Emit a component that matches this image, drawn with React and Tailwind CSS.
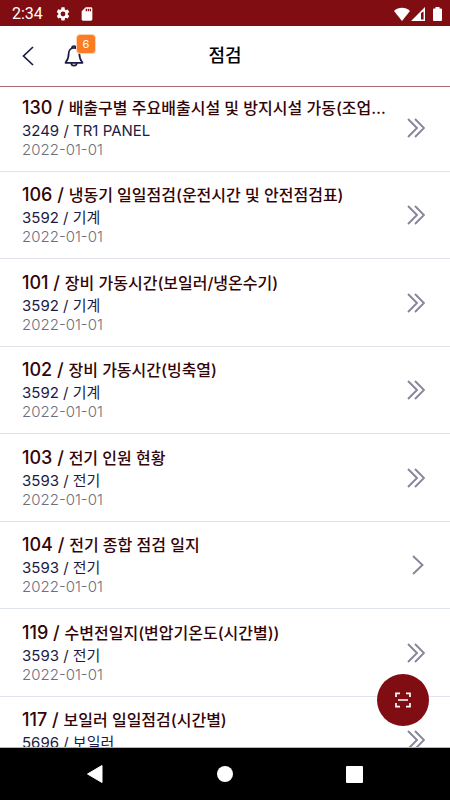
import React from 'react';

const items = [
  { id: 130, title: '배출구별 주요배출시설 및 방지시설 가동(조업시간별)', place: '3249 / TR1 PANEL', double: true },
  { id: 106, title: '냉동기 일일점검(운전시간 및 안전점검표)', place: '3592 / 기계', double: true },
  { id: 101, title: '장비 가동시간(보일러/냉온수기)', place: '3592 / 기계', double: true },
  { id: 102, title: '장비 가동시간(빙축열)', place: '3592 / 기계', double: true },
  { id: 103, title: '전기 인원 현황', place: '3593 / 전기', double: true },
  { id: 104, title: '전기 종합 점검 일지', place: '3593 / 전기', double: false },
  { id: 119, title: '수변전일지(변압기온도(시간별))', place: '3593 / 전기', double: true },
  { id: 117, title: '보일러 일일점검(시간별)', place: '5696 / 보일러', double: true },
];

const StatusBar = () => (
  <div className="flex h-[26px] shrink-0 items-center bg-[#7f0d12] pl-3 pr-2 pt-px text-white">
    <span className="font-['Roboto',sans-serif] text-base leading-5">2:34</span>
    <svg className="ml-3 size-4" viewBox="0 0 24 24" fill="currentColor">
      <path d="M19.14 12.94c.04-.3.06-.61.06-.94s-.02-.64-.07-.94l2.03-1.58a.5.5 0 0 0 .12-.61l-1.92-3.32a.49.49 0 0 0-.59-.22l-2.39.96c-.5-.38-1.03-.7-1.62-.94l-.36-2.54A.48.48 0 0 0 13.92 2h-3.84c-.24 0-.43.17-.47.41l-.36 2.54c-.59.24-1.13.57-1.62.94l-2.39-.96a.48.48 0 0 0-.59.22L2.74 8.87a.47.47 0 0 0 .12.61l2.03 1.58c-.05.3-.09.63-.09.94s.02.64.07.94l-2.03 1.58a.49.49 0 0 0-.12.61l1.92 3.32c.12.22.37.29.59.22l2.39-.96c.5.38 1.03.7 1.62.94l.36 2.54c.05.24.24.41.48.41h3.84c.24 0 .44-.17.47-.41l.36-2.54c.59-.24 1.13-.56 1.62-.94l2.39.96c.22.08.47 0 .59-.22l1.92-3.32a.47.47 0 0 0-.12-.61zM12 15.6a3.6 3.6 0 1 1 0-7.2 3.6 3.6 0 0 1 0 7.2z" />
    </svg>
    <svg className="ml-2 size-4" viewBox="0 0 24 24" fill="currentColor">
      <path d="M18 2h-8L4 8v12c0 1.1.9 2 2 2h12c1.1 0 2-.9 2-2V4c0-1.1-.9-2-2-2zm-6 6h-2V4h2v4zm3 0h-2V4h2v4zm3 0h-2V4h2v4z" />
    </svg>
    <svg className="ml-auto h-[14px] w-4" viewBox="0 0 16 14" fill="currentColor">
      <path d="M8 14 0 4C4.500-.300 11.500-.300 16 4z" />
    </svg>
    <svg className="ml-px h-[14px] w-[14px]" viewBox="0 0 14 14" fill="currentColor">
      <path fillRule="evenodd" d="M14 0v14H0zM12.600 4.500 10 6v6.600h2.600z" />
    </svg>
    <svg className="ml-2 h-[14px] w-[9px]" viewBox="0 0 9 14" fill="currentColor">
      <path d="M2.500 0h4v1.500H8a1 1 0 0 1 1 1V13a1 1 0 0 1-1 1H1a1 1 0 0 1-1-1V2.500a1 1 0 0 1 1-1h1.500z" />
    </svg>
  </div>
);

const Header = () => (
  <header className="relative z-10 grid h-[61px] shrink-0 grid-cols-[1fr_auto_1fr] items-center border-b border-[#a66b6c] bg-white px-[18px]">
    <div className="flex items-center gap-[26px]">
      <button type="button" aria-label="뒤로" className="flex size-5 items-center justify-center text-[#1b1b45]">
        <svg className="h-5 w-3" viewBox="0 0 12 20" fill="none" stroke="currentColor" strokeWidth="1.700">
          <path d="M11 1 1.500 10 11 19" />
        </svg>
      </button>
      <button type="button" aria-label="알림" className="relative flex size-5 items-center justify-center text-[#1b1b45]">
        <svg className="h-[22px] w-5" viewBox="0 0 20 22" fill="none" stroke="currentColor" strokeWidth="1.700" strokeLinejoin="round">
          <path d="M8 3a2 2 0 0 1 4 0" />
          <path d="M10 2.800C6.700 2.800 4.700 5.500 4.700 8.500c0 5-1 6.500-3.200 9.300h17c-2.200-2.800-3.200-4.300-3.200-9.300C15.300 5.500 13.300 2.800 10 2.800z" />
          <path d="M7.300 18a2.700 2.700 0 0 0 5.400 0" />
        </svg>
        <span className="absolute -top-3 left-3 flex size-5 items-center justify-center rounded border border-[#fcd3b5] bg-[#fb7c22] font-['Inter',sans-serif] text-[11px] leading-none text-white">
          6
        </span>
      </button>
    </div>
    <h1 className="font-['Inter','Noto_Sans_CJK_KR',sans-serif] text-lg font-medium leading-6 text-black">점검</h1>
  </header>
);

const Chevron = ({ double }) => (
  <svg className="ml-auto h-5 w-[18px] shrink-0 text-[#85859b]" viewBox="0 0 18 20" fill="none" stroke="currentColor" strokeWidth="1.900">
    {double ? (
      <>
        <path d="M1 1l9 9-9 9" />
        <path d="M8 1l9 9-9 9" />
      </>
    ) : (
      <path d="M6 1l9.500 9-9.500 9" />
    )}
  </svg>
);

const Row = ({ item }) => (
  <li className="border-b border-[#dfe3ec]">
    <a href={`#${item.id}`} className="flex h-full items-center pl-[22px] pr-[25px]">
      <div className="w-[370px] min-w-0 pb-0.5">
        <h2 className="truncate text-base font-medium leading-6 text-[#330507]">
          <span className="text-lg leading-6">{`${item.id} / `}</span>
          {item.title}
        </h2>
        <p className="text-[15px] leading-[22px] text-[#1b1b45]">{item.place}</p>
        <p className="text-[15px] font-light leading-4 text-[#6e6e80]">2022-01-01</p>
      </div>
      <Chevron double={item.double} />
    </a>
  </li>
);

const NavBar = () => (
  <nav className="flex h-[52px] shrink-0 items-center justify-center gap-28 bg-black text-white">
    <button type="button" aria-label="이전">
      <svg className="h-[18px] w-[17px]" viewBox="0 0 17 18" fill="currentColor">
        <path d="M15 .5v17L.5 9z" stroke="currentColor" strokeLinejoin="round" />
      </svg>
    </button>
    <button type="button" aria-label="홈" className="mx-px size-4 rounded-full bg-white" />
    <button type="button" aria-label="최근 앱" className="size-[17px] rounded-[1px] bg-white" />
  </nav>
);

export default function App() {
  return (
    <div className="flex h-screen flex-col overflow-hidden bg-white">
      <StatusBar />
      <Header />
      <main className="relative min-h-0 flex-1 overflow-hidden border-b border-[#b5b5b5]">
        {/* list is scrolled slightly under the header */}
        <ul className="-mt-[3px] grid auto-rows-[88px_87px] font-['Inter','Noto_Sans_CJK_KR',sans-serif]">
          {items.map((item) => (
            <Row key={item.id} item={item} />
          ))}
        </ul>
        <button
          type="button"
          aria-label="스캔"
          className="absolute bottom-[21px] right-[21px] flex size-[52px] items-center justify-center rounded-full bg-[#7f0d12] text-white"
        >
          <svg className="size-4" viewBox="0 0 16 16" fill="none" stroke="currentColor" strokeWidth="1.700">
            <path d="M1 5V1.300h4M11 1.300h4V5M15 11v3.700h-4M5 14.700H1V11M3 8h10" />
          </svg>
        </button>
      </main>
      <NavBar />
    </div>
  );
}
